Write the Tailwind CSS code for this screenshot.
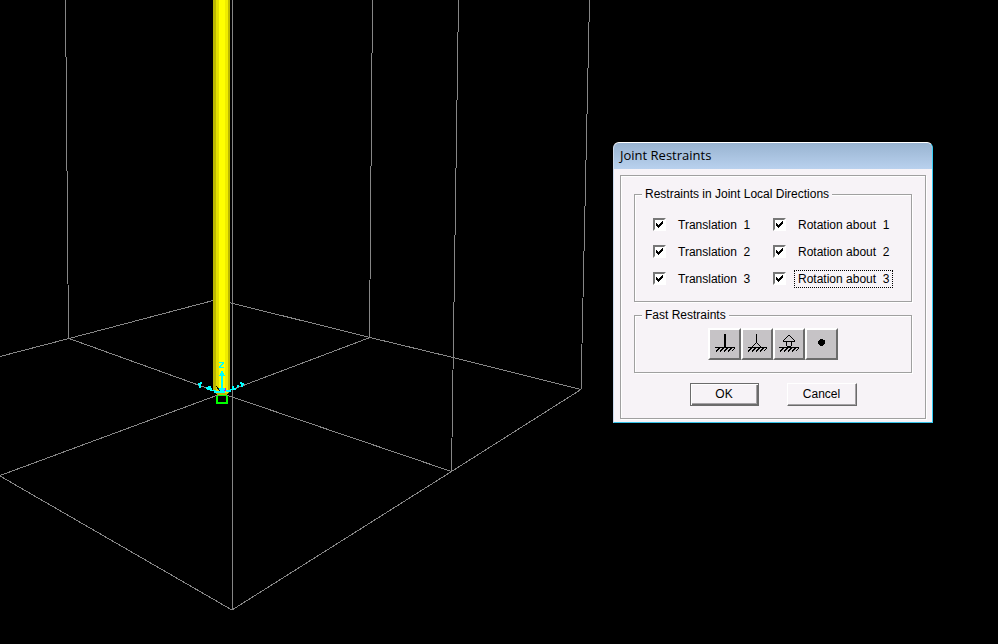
<!DOCTYPE html>
<html lang="en">
<head>
<meta charset="utf-8">
<title>Joint Restraints</title>
<script src="https://cdn.jsdelivr.net/npm/@tailwindcss/browser@4"></script>
</head>
<body class="relative min-h-screen overflow-hidden bg-black font-['Liberation_Sans',Arial,sans-serif] text-xs text-black">

<!-- 3D model view -->
<svg class="absolute inset-0 h-full w-full" viewBox="0 0 998 644" preserveAspectRatio="xMinYMin slice" shape-rendering="crispEdges" fill="none" role="img" aria-label="Model view">
  <g stroke="#868686">
    <path d="M65.500 0L68.500 339M372.500 0L369.500 338M458.500 0L451.500 472M589.500 0L581 390"/>
    <path d="M0 356.500L69 338.500L217 299.500L370 337.500L453 357.500L581 389.500"/>
    <path d="M69 338.500L222 393.500L451.500 471.500M0 475.500L222 393.500L370 337.500"/>
    <path d="M0 476L232 610L451.500 471.500L581 389.500"/>
  </g>
  <path d="M213 0H230V392L226 395H217L213 391Z" fill="#bcb800"/>
  <path d="M216 0H228V393H216Z" fill="#e4e000"/>
  <path d="M219 0H225V393H219Z" fill="#ffff00"/>
  <path d="M225 0H228V393H225Z" fill="#f0ec00"/>
  <path d="M232 0H233V610H232Z" fill="#868686"/>
  <g fill="#00ffff">
    <path d="M219 362H224V364H223V365H222V366H221V367H224V368H219V366H220V365H221V364H222V363H219Z"/>
    <path d="M222 371H223V373H224V375H225V376H223V391H221V376H219V375H220V373H221V371H222Z"/>
    <path d="M198 383H200V382H202V384H201V388H199V385H198ZM206 387H208V386H211V388H212V390H216V391H219V393H214V391H210V390H207V389H206Z"/>
    <path d="M240 382H242V383H244V385H243V387H241V384H240ZM237 385H239V387H238V388H236V390H231V392H226V390H230V389H232V386H234V388H237ZM219 388H225V393H219Z"/>
  </g>
  <path d="M216.500 386.500L220 391" stroke="#111100"/>
  <path d="M225 388H226V391H224V390H225Z" fill="#e000e0"/>
  <path d="M216 396H218V404H216ZM218 395H227V396H218ZM217 402H227V404H217ZM226 396H228V404H226Z" fill="#00ff00"/>
</svg>

<!-- Dialog window -->
<form class="absolute left-[613px] top-[142px] w-80 overflow-hidden rounded-t-md border border-t-white border-r-[#35cdf5] border-b-[#35c2e8] border-l-[#ccdaee] bg-[#f7f3f7]" role="dialog" aria-labelledby="title">
  <h1 id="title" class="flex h-[26px] items-center bg-linear-to-b from-[#99b4d1] to-[#b9d1ee] px-1.5 font-['Open_Sans',sans-serif] text-[13px]">Joint Restraints</h1>
  <div class="px-1.5 pt-1.5 pb-[3px]">
    <div class="border border-[#a0a0a0] px-[13px] pt-[11px] pb-3 shadow-[1px_1px_0_#fff,inset_1px_1px_0_#fff]">

      <fieldset class="border border-[#a0a0a0] px-[18px] pt-2.5 pb-[9px] shadow-[1px_1px_0_#fff,inset_1px_1px_0_#fff]">
        <legend class="-ml-[11px] h-3.5 bg-[#f7f3f7] px-[3px] leading-[14px]">Restraints in Joint Local Directions</legend>
        <div class="grid grid-cols-2">
          <label class="flex h-[27px] items-center gap-2 whitespace-pre"><span class="grid shrink-0 place-items-center"><input type="checkbox" checked class="peer col-start-1 row-start-1 h-[13px] w-[13px] appearance-none border-2 border-t-[#777] border-r-white border-b-white border-l-[#777] bg-white outline-none"><svg class="pointer-events-none invisible col-start-1 row-start-1 h-[7px] w-[7px] peer-checked:visible" viewBox="0 0 7 7" shape-rendering="crispEdges"><path d="M0 2H1V3H2V4H3V3H4V2H5V1H6V0H7V3H6V4H5V5H4V6H3V7H2V6H1V5H0Z"/></svg></span><span class="px-1 py-px">Translation  1</span></label>
          <label class="flex h-[27px] items-center gap-2 whitespace-pre"><span class="grid shrink-0 place-items-center"><input type="checkbox" checked class="peer col-start-1 row-start-1 h-[13px] w-[13px] appearance-none border-2 border-t-[#777] border-r-white border-b-white border-l-[#777] bg-white outline-none"><svg class="pointer-events-none invisible col-start-1 row-start-1 h-[7px] w-[7px] peer-checked:visible" viewBox="0 0 7 7" shape-rendering="crispEdges"><path d="M0 2H1V3H2V4H3V3H4V2H5V1H6V0H7V3H6V4H5V5H4V6H3V7H2V6H1V5H0Z"/></svg></span><span class="px-1 py-px">Rotation about  1</span></label>
          <label class="flex h-[27px] items-center gap-2 whitespace-pre"><span class="grid shrink-0 place-items-center"><input type="checkbox" checked class="peer col-start-1 row-start-1 h-[13px] w-[13px] appearance-none border-2 border-t-[#777] border-r-white border-b-white border-l-[#777] bg-white outline-none"><svg class="pointer-events-none invisible col-start-1 row-start-1 h-[7px] w-[7px] peer-checked:visible" viewBox="0 0 7 7" shape-rendering="crispEdges"><path d="M0 2H1V3H2V4H3V3H4V2H5V1H6V0H7V3H6V4H5V5H4V6H3V7H2V6H1V5H0Z"/></svg></span><span class="px-1 py-px">Translation  2</span></label>
          <label class="flex h-[27px] items-center gap-2 whitespace-pre"><span class="grid shrink-0 place-items-center"><input type="checkbox" checked class="peer col-start-1 row-start-1 h-[13px] w-[13px] appearance-none border-2 border-t-[#777] border-r-white border-b-white border-l-[#777] bg-white outline-none"><svg class="pointer-events-none invisible col-start-1 row-start-1 h-[7px] w-[7px] peer-checked:visible" viewBox="0 0 7 7" shape-rendering="crispEdges"><path d="M0 2H1V3H2V4H3V3H4V2H5V1H6V0H7V3H6V4H5V5H4V6H3V7H2V6H1V5H0Z"/></svg></span><span class="px-1 py-px">Rotation about  2</span></label>
          <label class="flex h-[27px] items-center gap-2 whitespace-pre"><span class="grid shrink-0 place-items-center"><input type="checkbox" checked class="peer col-start-1 row-start-1 h-[13px] w-[13px] appearance-none border-2 border-t-[#777] border-r-white border-b-white border-l-[#777] bg-white outline-none"><svg class="pointer-events-none invisible col-start-1 row-start-1 h-[7px] w-[7px] peer-checked:visible" viewBox="0 0 7 7" shape-rendering="crispEdges"><path d="M0 2H1V3H2V4H3V3H4V2H5V1H6V0H7V3H6V4H5V5H4V6H3V7H2V6H1V5H0Z"/></svg></span><span class="px-1 py-px">Translation  3</span></label>
          <label class="flex h-[27px] items-center gap-2 whitespace-pre"><span class="grid shrink-0 place-items-center"><input type="checkbox" checked class="peer col-start-1 row-start-1 h-[13px] w-[13px] appearance-none border-2 border-t-[#777] border-r-white border-b-white border-l-[#777] bg-white outline-none"><svg class="pointer-events-none invisible col-start-1 row-start-1 h-[7px] w-[7px] peer-checked:visible" viewBox="0 0 7 7" shape-rendering="crispEdges"><path d="M0 2H1V3H2V4H3V3H4V2H5V1H6V0H7V3H6V4H5V5H4V6H3V7H2V6H1V5H0Z"/></svg></span><span class="border border-dotted border-black px-[3px]">Rotation about  3</span></label>
        </div>
      </fieldset>

      <fieldset class="mt-1.5 border border-[#a0a0a0] px-[18px] pt-1.5 pb-3 shadow-[1px_1px_0_#fff,inset_1px_1px_0_#fff]">
        <legend class="-ml-[11px] h-3.5 bg-[#f7f3f7] px-[3px] leading-[14px]">Fast Restraints</legend>
        <div class="flex justify-center">
          <button type="button" aria-label="Fixed" class="flex h-8 w-[33px] items-center justify-center border-2 border-t-white border-r-[#6b6b6b] border-b-[#6b6b6b] border-l-white bg-[#c6c3c6]">
            <svg class="h-6 w-6" viewBox="0 1 24 24" shape-rendering="crispEdges"><path d="M11 3H13V17H11ZM2 16H22V17H2Z"/><path d="M6.500 17L3 20.500M10.500 17L7 20.500M14.500 17L11 20.500M18.500 17L15 20.500M22 17L18.500 20.500" stroke="#000"/></svg>
          </button>
          <button type="button" aria-label="Pinned" class="flex h-8 w-8 items-center justify-center border-2 border-t-white border-r-[#6b6b6b] border-b-[#6b6b6b] border-l-white bg-[#c6c3c6]">
            <svg class="h-6 w-6" viewBox="0 1 24 24" shape-rendering="crispEdges"><path d="M11 3H12V12H11ZM3 16H22V17H3Z"/><path d="M11.500 11.500L7 16M11.500 11.500L16 16M6.500 17L3 20.500M10.500 17L7 20.500M14.500 17L11 20.500M18.500 17L15 20.500M22 17L18.500 20.500" stroke="#000" fill="none"/></svg>
          </button>
          <button type="button" aria-label="Roller" class="flex h-8 w-8 items-center justify-center border-2 border-t-white border-r-[#6b6b6b] border-b-[#6b6b6b] border-l-white bg-[#c6c3c6]">
            <svg class="h-6 w-6" viewBox="0 1 24 24" shape-rendering="crispEdges"><path d="M2 16H22V17H2Z"/><path d="M11.500 4.500H12.500L17.500 9.500V10.500H6.500V9.500ZM10.500 10.500L9.500 11.500V14.500L10.500 15.500H13.500L14.500 14.500V11.500L13.500 10.500M6.500 17L3 20.500M10.500 17L7 20.500M14.500 17L11 20.500M18.500 17L15 20.500M22 17L18.500 20.500" stroke="#000" fill="none"/></svg>
          </button>
          <button type="button" aria-label="Free" class="flex h-8 w-[33px] items-center justify-center border-2 border-t-white border-r-[#6b6b6b] border-b-[#6b6b6b] border-l-white bg-[#c6c3c6]">
            <svg class="h-6 w-6" viewBox="0 1 24 24" shape-rendering="crispEdges"><path d="M10 8H13V9H15V13H14V14H13V15H10V14H9V13H8V10H9V9H10Z"/></svg>
          </button>
        </div>
      </fieldset>

      <div class="mt-2.5 flex justify-center gap-7">
        <button type="submit" class="h-[23px] w-[69px] border border-[#6b6b6b] bg-[#f7f3f7] leading-[19px] shadow-[inset_1px_1px_0_#fff,inset_-1px_-1px_0_#6b6b6b,inset_-2px_-2px_0_#a5a2a5]">OK</button>
        <button type="button" class="h-[23px] w-[70px] border border-t-white border-r-[#6b6b6b] border-b-[#6b6b6b] border-l-white bg-[#f7f3f7] leading-[19px] shadow-[inset_-1px_-1px_0_#a5a2a5]">Cancel</button>
      </div>
    </div>
  </div>
</form>
</body>
</html>
